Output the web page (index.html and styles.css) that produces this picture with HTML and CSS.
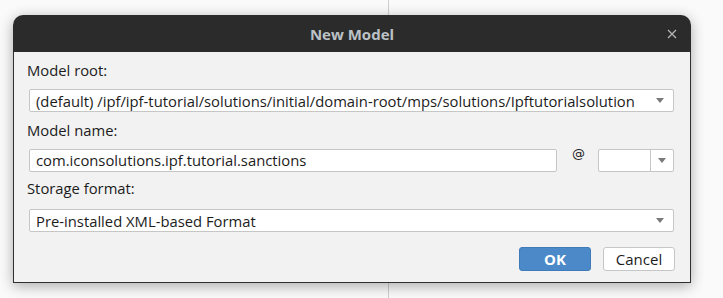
FILE: index.html
```html
<!DOCTYPE html>
<html lang="en">
<head>
    <meta charset="UTF-8">
    <title>New Model</title>
    <link rel="stylesheet" href="styles.css">
</head>
<body>
    <div class="dialog">
        <div class="titleBar">
            <span class="title">New Model</span>
            <svg class="closeBtn" width="10" height="10" viewBox="0 0 10 10">
                <path d="M1 1L9 9M9 1L1 9" stroke="#b4b4b4" stroke-width="1.3" fill="none"/>
            </svg>
        </div>
        <div class="content">
            <div class="label">Model root:</div>
            <div class="combo rootCombo">
                <span class="comboText">(default) /ipf/ipf-tutorial/solutions/initial/domain-root/mps/solutions/Ipftutorialsolution</span>
                <span class="arrow"></span>
            </div>

            <div class="label nameLabel">Model name:</div>
            <div class="nameRow">
                <div class="field nameField">com.iconsolutions.ipf.tutorial.sanctions</div>
                <span class="at">@</span>
                <div class="smallCombo">
                    <span class="smallValue"></span>
                    <span class="smallArrow"><span class="arrow"></span></span>
                </div>
            </div>

            <div class="label storageLabel">Storage format:</div>
            <div class="combo storageCombo">
                <span class="comboText">Pre-installed XML-based Format</span>
                <span class="arrow"></span>
            </div>

            <div class="buttons">
                <button class="btn okBtn">OK</button>
                <button class="btn cancelBtn">Cancel</button>
            </div>
        </div>
    </div>
</body>
</html>
```

FILE: styles.css
```css
body {
    margin: 0;
    height: 298px;
    background-color: #fafafa;
    background-image: linear-gradient(to right, transparent 388px, #cfcfcf 388px, #cfcfcf 389px, transparent 389px);
    font-family: "Open Sans", "Noto Sans", sans-serif;
    font-size: 14.8px;
    color: #1c1c1c;
    overflow: hidden;
}

.dialog {
    margin: 15px 0 0 13px;
    width: 678px;
    border-radius: 10px 10px 0 0;
    box-shadow: 0 3px 14px rgba(0, 0, 0, 0.32);
}

.titleBar {
    height: 37px;
    background-color: #2b2b2b;
    border-radius: 10px 10px 0 0;
    display: flex;
    align-items: center;
    justify-content: center;
    position: relative;
}

.title {
    color: #bcc1c6;
    font-weight: bold;
    font-size: 15px;
}

.closeBtn {
    position: absolute;
    right: 14px;
    top: 14px;
}

.content {
    background-color: #f2f2f2;
    border: 1px solid #303030;
    border-top: none;
    padding: 8px 16px 11px 15px;
    display: flex;
    flex-direction: column;
}

.label {
    height: 20px;
    line-height: 20px;
    margin-left: -2px;
}

.combo, .field, .smallCombo {
    box-sizing: border-box;
    height: 23px;
    background-color: #ffffff;
    border: 1px solid #c6c6c6;
    border-radius: 2px;
}

.combo {
    display: flex;
    align-items: center;
    justify-content: space-between;
    padding: 0 9px 0 6px;
}

.rootCombo {
    margin-top: 9px;
}

.comboText, .field {
    white-space: nowrap;
}

.arrow {
    width: 0;
    height: 0;
    border-left: 4px solid transparent;
    border-right: 4px solid transparent;
    border-top: 5px solid #7a7a7a;
}

.nameLabel {
    margin-top: 8px;
}

.nameRow {
    margin-top: 9px;
    display: flex;
    align-items: flex-start;
}

.field {
    width: 528px;
    line-height: 21px;
    padding-left: 6px;
}

.at {
    margin-left: 15px;
    margin-top: -3px;
    font-family: "DejaVu Sans", sans-serif;
    font-size: 13px;
    width: 12px;
}

.smallCombo {
    margin-left: 14px;
    width: 76px;
    display: flex;
}

.smallValue {
    flex: 1;
}

.smallArrow {
    width: 22px;
    border-left: 1px solid #c6c6c6;
    display: flex;
    align-items: center;
    justify-content: center;
}

.storageLabel {
    margin-top: 6px;
}

.storageCombo {
    margin-top: 11px;
}

.buttons {
    margin-top: 15px;
    display: flex;
    justify-content: flex-end;
    gap: 12px;
    margin-right: -1px;
}

.btn {
    width: 72px;
    height: 24px;
    border-radius: 3px;
    font-family: "Open Sans", "Noto Sans", sans-serif;
    font-size: 15px;
    padding: 0;
}

.okBtn {
    background-color: #4b89c8;
    border: 1px solid #3f7bb8;
    color: #ffffff;
    font-weight: bold;
}

.cancelBtn {
    background-color: #ffffff;
    border: 1px solid #c6c6c6;
    color: #1c1c1c;
}
```
